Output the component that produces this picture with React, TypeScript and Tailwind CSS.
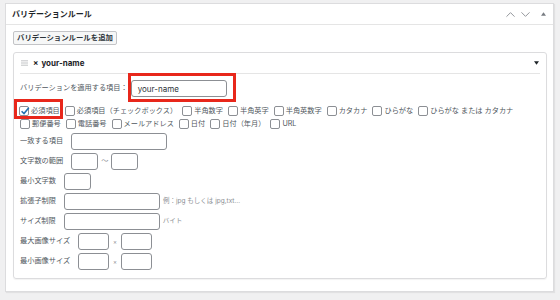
import React from 'react';
import { ChevronUp, ChevronDown } from 'lucide-react';

const FONT = { fontFamily: 'Inter, "Noto Sans CJK JP", sans-serif' };

const Box: React.FC<{ checked?: boolean }> = ({ checked }) => (
  <span className="relative inline-block w-[10px] h-[10px] shrink-0 rounded-[2px] border border-[#8c8f94] bg-white">
    {checked && (
      <svg viewBox="0 0 10 10" className="absolute left-[0px] top-[-1px] w-[10px] h-[10px]">
        <path d="M1.6 5.2 L4 7.6 L8.8 1.8" fill="none" stroke="#2271b1" strokeWidth="1.6" />
      </svg>
    )}
  </span>
);

const Check: React.FC<{ label: string; checked?: boolean }> = ({ label, checked }) => (
  <label className="flex items-center gap-[2px] whitespace-nowrap">
    <Box checked={checked} />
    <span>{label}</span>
  </label>
);

const Input: React.FC<{ w: string; value?: string }> = ({ w, value }) => (
  <div className={`${w} h-[17px] shrink-0 rounded-[3px] border border-[#8c8f94] bg-white flex items-center px-[6px] text-[8px] text-[#2c3338]`}>
    {value}
  </div>
);

const Row: React.FC<{ label: string; children: React.ReactNode }> = ({ label, children }) => (
  <div className="flex items-center h-[17px] gap-[8px]">
    <span className="whitespace-nowrap">{label}</span>
    {children}
  </div>
);

const row1 = ['必須項目（チェックボックス）', '半角数字', '半角英字', '半角英数字', 'カタカナ', 'ひらがな', 'ひらがな または カタカナ'];
const row2 = ['郵便番号', '電話番号', 'メールアドレス', '日付', '日付（年月）', 'URL'];

export default function App() {
  return (
    <div className="relative min-h-[300px] bg-[#f0f0f1] pt-[3px] pl-[5px]" style={FONT}>
      <div className="w-[549px] h-[289px] bg-white border border-[#dcdcde] shadow-[1px_1px_1px_rgba(0,0,0,0.06)]">
        <div className="h-[21px] border-b border-[#e5e5e5] flex items-center justify-between pl-[6px] pr-[7px]">
          <span className="text-[8px] font-bold text-[#1d2327]">バリデーションルール</span>
          <div className="flex items-center text-[#8c8f94]">
            <ChevronUp size={15} strokeWidth={1.5} />
            <ChevronDown size={15} strokeWidth={1.5} className="ml-[0px]" />
            <svg viewBox="0 0 6 4" className="w-[5px] h-[4px] ml-[8px]">
              <path d="M0 4 L3 0 L6 4 Z" fill="#787c82" />
            </svg>
          </div>
        </div>
        <div className="pl-[7px] pt-[6px]">
          <div className="flex w-fit items-center h-[14px] px-[3px] rounded-[2px] border border-[#c3c4c7] bg-[#f6f7f7] text-[7.4px] font-bold text-[#2c3338]">
            バリデーションルールを追加
          </div>
          <div className="mt-[7px] w-[534px] h-[227px] rounded-[3px] border border-[#dcdcde] shadow-[0_1px_1px_rgba(0,0,0,0.05)] px-[6px] text-[7.2px] text-[#50575e]">
            <div className="h-[21px] border-b border-[#e5e5e5] flex items-center justify-between">
              <div className="flex items-center">
                <svg viewBox="0 0 8 6" className="w-[7px] h-[6px] ml-[1px]">
                  <path d="M0 0.5 H8 M0 3 H8 M0 5.5 H8" stroke="#a7aaad" strokeWidth="0.8" />
                </svg>
                <span className="ml-[5px] text-[8px] font-bold text-[#1d2327]">×</span>
                <span className="ml-[3px] text-[8px] font-bold text-[#1d2327]">your-name</span>
              </div>
              <svg viewBox="0 0 6 4" className="w-[5px] h-[4px] mr-[1px]">
                <path d="M0 0 L6 0 L3 4 Z" fill="#1d2327" />
              </svg>
            </div>
            <div className="mt-[6px]">
              <Row label="バリデーションを適用する項目：">
                <div className="-ml-[5px]">
                  <Input w="w-[96px]" value="your-name" />
                </div>
              </Row>
            </div>
            <div className="mt-[8px] flex items-center h-[13px] gap-[5px] -ml-[1px]">
              <Check label="必須項目" checked />
              {row1.map((l) => (
                <Check key={l} label={l} />
              ))}
            </div>
            <div className="flex items-center h-[13px] gap-[5px]">
              {row2.map((l) => (
                <Check key={l} label={l} />
              ))}
            </div>
            <div className="mt-[2px] flex flex-col gap-[3px]">
              <Row label="一致する項目">
                <Input w="w-[96px]" />
              </Row>
              <Row label="文字数の範囲">
                <div className="flex items-center gap-[3px]">
                  <Input w="w-[27px]" />
                  <span className="text-[#8c8f94]">〜</span>
                  <Input w="w-[27px]" />
                </div>
              </Row>
              <Row label="最小文字数">
                <Input w="w-[27px]" />
              </Row>
              <Row label="拡張子制限">
                <div className="flex items-center gap-[3px]">
                  <Input w="w-[96px]" />
                  <span className="text-[6.5px] text-[#8c8f94] whitespace-nowrap">例：jpg もしくは jpg,txt…</span>
                </div>
              </Row>
              <Row label="サイズ制限">
                <div className="flex items-center gap-[3px]">
                  <Input w="w-[96px]" />
                  <span className="text-[6.5px] text-[#8c8f94]">バイト</span>
                </div>
              </Row>
              <Row label="最大画像サイズ">
                <div className="flex items-center gap-[4px]">
                  <Input w="w-[31px]" />
                  <span className="text-[6px] text-[#8c8f94]">×</span>
                  <Input w="w-[31px]" />
                </div>
              </Row>
              <Row label="最小画像サイズ">
                <div className="flex items-center gap-[4px]">
                  <Input w="w-[31px]" />
                  <span className="text-[6px] text-[#8c8f94]">×</span>
                  <Input w="w-[31px]" />
                </div>
              </Row>
            </div>
          </div>
        </div>
      </div>
      <div className="absolute left-[128px] top-[73px] w-[108px] h-[29px] border-[3px] border-[#e8271b]" />
      <div className="absolute left-[14px] top-[99px] w-[49px] h-[20px] border-[3px] border-[#e8271b]" />
    </div>
  );
}
